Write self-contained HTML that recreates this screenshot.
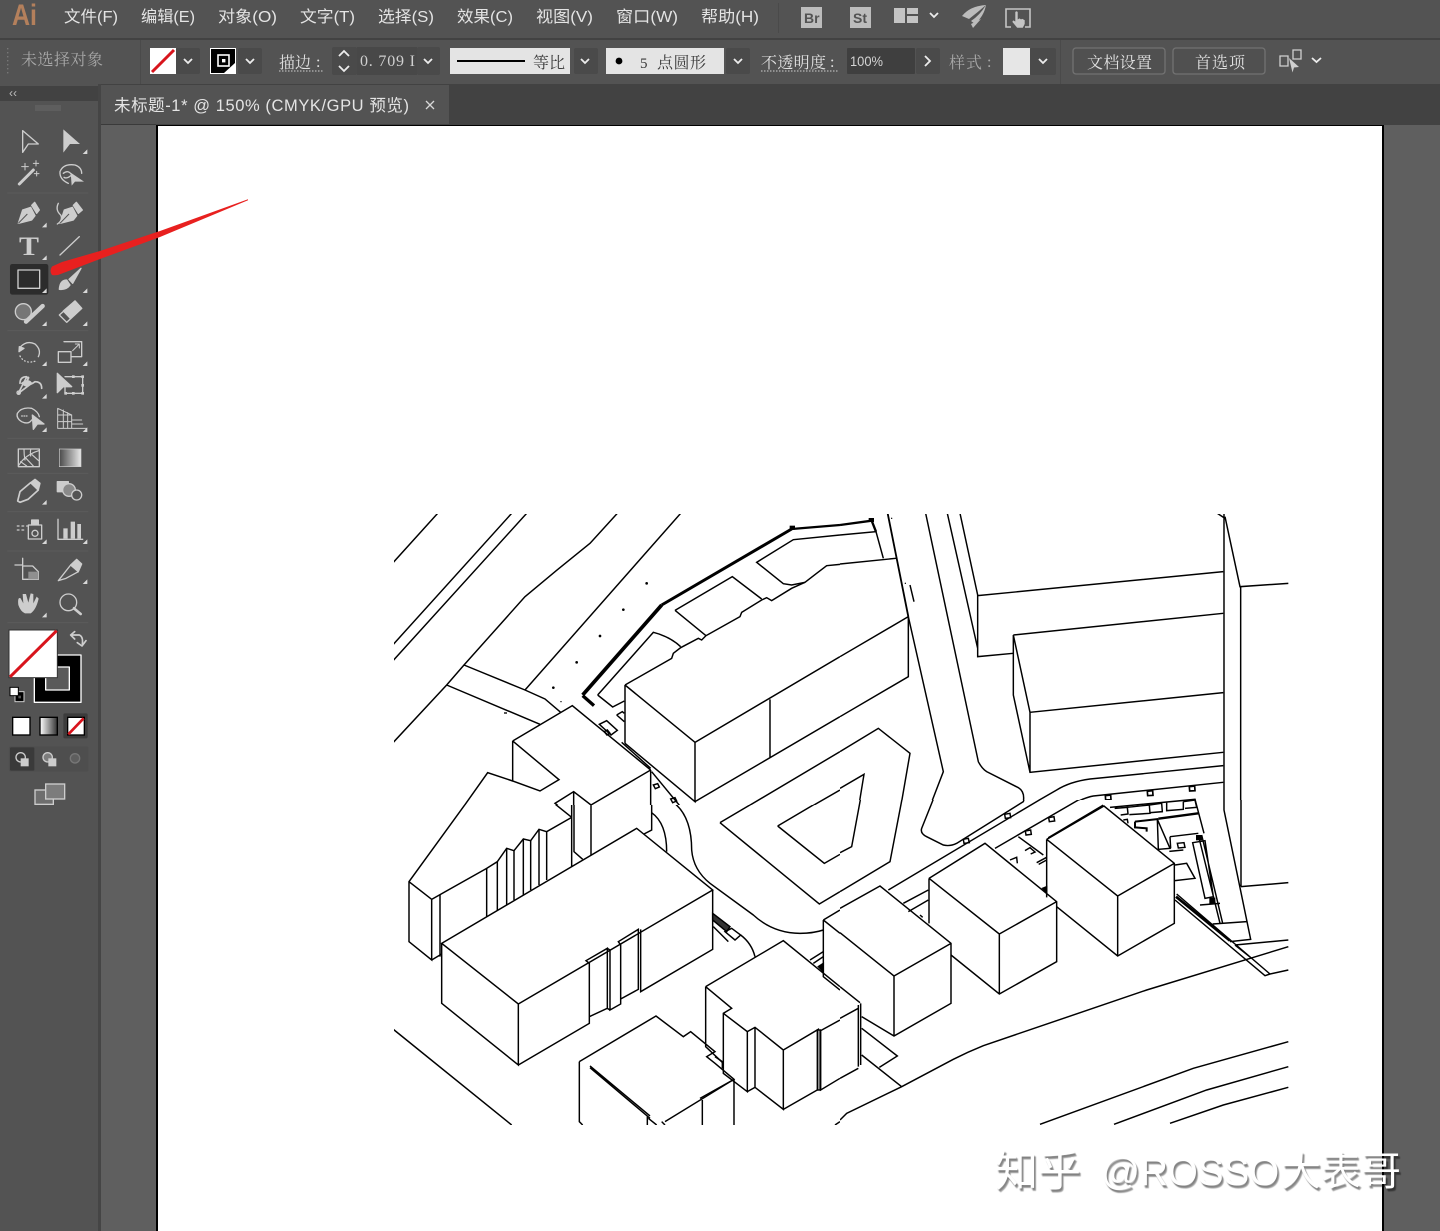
<!DOCTYPE html>
<html lang="zh"><head><meta charset="utf-8"><title>Illustrator</title>
<style>
html,body{margin:0;padding:0;background:#5f5f5f}
svg{display:block}
.m{font:16px "Liberation Sans","Noto Sans CJK SC",sans-serif;fill:#e4e4e4}
.o{font:16px "Liberation Serif","Noto Serif CJK SC",serif;fill:#e0e0e0}
.d{fill:#3a3a3a}
.g{fill:#a8a8a8}
.art{fill:none;stroke:#000;stroke-width:4.4;stroke-linejoin:miter}
.ic{fill:none;stroke:#cdcdcd;stroke-width:4;stroke-linejoin:round;stroke-linecap:round}
.f{fill:#cdcdcd}
.chev{fill:none;stroke:#ececec;stroke-width:1.8}
.wm{position:absolute;font:40px "Liberation Sans","Noto Sans CJK SC",sans-serif;color:#fff;text-shadow:2px 3px 1px rgba(0,0,0,.36),1px 2px 1px rgba(0,0,0,.22);white-space:nowrap;line-height:46px}
</style></head>
<body>
<div style="position:relative;width:1440px;height:1231px;overflow:hidden">
<svg width="1440" height="1231" viewBox="0 0 1440 1231" xmlns="http://www.w3.org/2000/svg">
<defs>
<clipPath id="c5"><rect x="394" y="514" width="446" height="291"/></clipPath>
<clipPath id="c6"><rect x="840" y="514" width="450" height="286"/></clipPath>
<clipPath id="c7"><rect x="394" y="805" width="446" height="320"/></clipPath>
<clipPath id="c8"><rect x="840" y="800" width="450" height="325"/></clipPath>
<linearGradient id="gr" x1="0" x2="1"><stop offset="0" stop-color="#4a4a4a"/><stop offset="1" stop-color="#e8e8e8"/></linearGradient>
<linearGradient id="gr2" x1="0" x2="1"><stop offset="0" stop-color="#fff"/><stop offset="1" stop-color="#333"/></linearGradient>
</defs>

<!-- canvas -->
<rect width="1440" height="1231" fill="#5f5f5f"/>
<rect x="156" y="124" width="1228" height="1107" fill="#000"/>
<rect x="158" y="126" width="1224" height="1105" fill="#fff"/>

<!-- artwork zone 5 -->
<g clip-path="url(#c5)"><g transform="translate(390 505) scale(.33333)" class="art">
<path d="M10 172L143 25M10 418L365 25M10 466L410 25"/>
<path d="M10 712L170 540L222 480L405 275Q500 195 600 115L682 25"/>
<path d="M405 555L872 25"/>
<path d="M222 480L405 555L465 582L512 622M170 540L450 658"/>
<path d="M578 570L815 300" stroke-width="11"/>
<path d="M815 300L1205 72" stroke-width="9"/>
<path d="M1205 72L1350 60" stroke-width="7"/>
<path d="M578 572L612 602" stroke-width="10"/>
<path d="M623 570L790 382Q840 395 872 425M623 570L668 606L703 588"/>
<path d="M1350 90L1210 104L1100 172L1180 236L1205 240L1245 232L1280 205L1310 182L1350 178"/>
<path d="M855 316L1027 215L1115 282M855 316L948 392"/>
<path d="M705 540L845 460L850 445L872 428L925 400L935 405L948 392L1050 335L1055 322L1115 285L1130 278L1145 287L1205 250L1245 232"/>
<path d="M705 540L705 715M705 540L915 712L915 890L705 715M915 712L1350 455M915 890L1350 635M1140 583L1140 758"/>
<path d="M680 630L697 620L703 625M680 630L703 650"/>
<path d="M628 658L650 647L682 676L663 690Z"/>
<path d="M643 680L652 675L660 685L651 690Z"/>
<path d="M368 708L547 602L782 795M368 708L368 828L450 858L507 824L368 708"/>
<path d="M368 828L293 803L203 930"/>
<path d="M782 795L603 900L551 860L495 895L540 930M551 860L551 930M603 900L603 930M782 795L782 930"/>
<path d="M695 712L782 790"/>
<path d="M785 800L888 925"/>
<path d="M790 840L803 836L808 846L796 851ZM842 882L855 878L860 888L848 893Z"/>
<path d="M1030 930L1350 740M1220 930L1350 855"/>
<g fill="#000" stroke="none"><circle cx="770" cy="235" r="4"/><circle cx="700" cy="314" r="4"/><circle cx="630" cy="393" r="4"/><circle cx="560" cy="472" r="4"/><circle cx="490" cy="548" r="4"/><circle cx="513" cy="590" r="2"/><rect x="342" y="622" width="9" height="4"/><rect x="1199" y="62" width="16" height="12"/></g>
</g></g>

<!-- artwork zone 6 -->
<g clip-path="url(#c6)"><g transform="translate(840 505) scale(.33333)" class="art">
<path d="M0 60L95 47L108 80" stroke-width="7"/>
<rect x="86" y="39" width="16" height="12" fill="#000" stroke="none"/>
<path d="M0 90L108 80L130 160M0 177L168 160"/>
<path d="M143 25L205 335" stroke-width="5.500"/>
<path d="M205 335L205 515L0 635M205 335L0 455"/>
<path d="M205 335L310 800L260 930"/>
<path d="M210 240L222 290"/>
<path d="M257 25L415 770Q425 790 440 800L535 848Q555 860 550 890L490 928"/>
<path d="M322 25L413 430M360 25L413 270L413 455L520 445M413 272L1150 200"/>
<path d="M520 390L1150 325M520 390L520 570L570 802L1150 742M520 390L570 622L570 802M570 622L1150 563"/>
<path d="M1150 782L750 822Q690 830 650 855L520 930"/>
<path d="M1150 832L760 873Q720 880 640 930"/>
<path d="M1152 25L1152 915L1155 930M1202 245L1202 930M1155 35L1200 245L1345 235M1132 25L1155 40"/>
<path d="M0 740L115 670L210 745L178 930M0 850L72 808L52 930"/>
<g fill="#000" stroke="none"><circle cx="155" cy="40" r="2"/><circle cx="196" cy="235" r="2"/></g>
<path d="M796 872L812 870L813 884L797 885ZM922 859L938 857L939 871L923 872ZM1048 845L1064 843L1065 857L1049 858Z" stroke-width="5"/>
</g></g>

<!-- artwork zone 7 -->
<g clip-path="url(#c7)"><g transform="translate(390 800) scale(.33333)" class="art">
<path d="M235 0L57 245L57 425L125 480L125 298L57 245M125 298L290 205L322 185L350 145L372 152L400 117L422 122L447 88L470 95L545 52"/>
<path d="M150 285L150 470M125 480L155 462"/>
<path d="M290 205L290 350M322 185L322 332M350 145L350 315M372 152L372 300M400 117L400 285M422 122L422 270M447 88L447 255M470 95L470 240"/>
<path d="M545 52L495 12L530 0M545 0L545 200M552 0L552 155L578 178M603 0L603 165M785 0L785 90L762 102"/>
<path d="M155 430L740 85L968 270L385 612ZM155 430L155 610L385 795L385 612M385 795L598 670L598 490L588 482L652 445L652 625L598 650"/>
<path d="M652 445L660 450L660 630L692 612L692 435L685 425L745 388L745 568L692 597M660 630L652 625"/>
<path d="M752 388L752 575L968 448L968 270"/>
<path d="M785 38Q830 70 830 155"/>
<path d="M840 0Q905 40 905 150Q910 210 960 250L1090 345Q1150 400 1230 400Q1270 400 1300 390"/>
<path d="M968 340L1020 380L1010 395L968 360Z" fill="#333" stroke="#000"/>
<path d="M1005 395L1025 385L1052 405L1035 420Z"/>
<path d="M970 380L1015 425M1052 405Q1085 430 1095 470"/>
<path d="M990 68L1288 312L1350 275M990 68L1105 0M1163 78L1303 190L1350 163M1163 78L1295 0"/>
<path d="M10 688L365 975"/>
<path d="M1300 360L1350 330M1300 360L1350 400M1300 360L1300 530L1350 570"/>
<path d="M947 560L1180 422L1350 560M947 560L1025 625L1000 640L1000 820L1072 875L1072 695L1000 640M947 560L947 740L1000 790"/>
<path d="M1072 695L1095 682L1180 750L1180 928L1095 862L1072 875M1095 682L1095 862M1180 750L1285 688L1285 870M1180 928L1285 868M1292 690L1292 870L1350 835M1292 692L1350 660"/>
<rect x="1282" y="690" width="9" height="180" fill="#999" stroke="#000"/>
<path d="M568 785L798 648L880 710L902 695L975 755L950 770L975 790L1032 838L825 965M568 785L568 965L578 975"/>
<path d="M600 798L780 948M600 803L780 955M1032 838L1032 975M937 900L937 975M930 895L1032 838M772 950L772 975M775 955L800 975M815 965L825 975"/>
<path d="M975 770L997 785L997 805M1260 480L1300 455M1270 490L1300 470"/>
<path d="M1285 500L1300 490L1300 515Z" fill="#000"/>
<path d="M1335 975L1350 965"/>
</g></g>

<!-- artwork zone 8 -->
<g clip-path="url(#c8)"><g transform="translate(840 780) scale(.33333)" class="art">
<path d="M197 0L150 245L0 335M72 0L35 200L0 218"/>
<path d="M303 0L245 145Q240 160 260 170L310 195Q330 200 350 190L550 65Q555 50 550 35L490 0"/>
<path d="M145 330L640 35Q680 5 750 0M465 205L715 60Q740 50 800 45L1150 5"/>
<path d="M0 385L120 318L333 490L333 670L162 768L65 710M0 458L162 588L162 768M162 588L333 490"/>
<path d="M267 295L435 190L650 365L650 545L478 642L333 525M267 295L478 462L478 642M478 462L650 365M267 295L267 430"/>
<path d="M620 178L792 78L1003 250L1003 430L833 528L650 380M620 178L620 352M620 178L833 348L833 528M833 348L1003 250"/>
<path d="M625 174L790 76" stroke-width="6"/>
<path d="M190 370L265 330M205 395L265 360M240 405L248 412"/>
<path d="M0 620L60 668M0 715L55 685M55 675L55 860M62 670L62 855M0 895L55 865"/>
<path d="M0 1020L20 1000L185 920L340 838Q385 815 430 797L920 630L1345 500M65 825L185 920M65 745L172 828L118 862"/>
<path d="M600 1033L1060 865L1345 785M822 1033L1100 930L1345 860M990 1030L1150 975L1345 922"/>
<path d="M1152 0L1152 90L1232 478L1170 485M1203 320L1345 308M1203 0L1203 320"/>
<path d="M1008 350L1170 482" stroke-width="8"/>
<path d="M1010 342L1290 582M1005 360L1275 587L1290 582M1290 582L1345 570M1185 495L1345 480M1185 495L1235 535"/>
<path d="M370 178L385 175L388 188L372 190ZM494 103L510 100L512 113L496 115ZM556 153L572 150L574 163L558 165ZM626 113L642 110L644 123L628 125Z"/>
<path d="M535 170L610 225M510 240L530 232L532 250M555 212L570 203L585 216L572 222M590 248L620 232M596 253L620 240"/>
<path d="M608 325L620 320L620 338Z" fill="#000"/>
</g></g>

<!-- details zone 10 -->
<g transform="translate(1050 770) scale(.33333)" class="art">
<path d="M180 112L435 88L462 190"/>
<path d="M194 115L232 112L234 132L212 135M232 112L298 105L300 130L238 134M298 105L335 100L337 125L302 128M350 98L350 122L400 118L400 95M400 95L435 90L440 112L405 115"/>
<path d="M325 146L445 130" stroke-width="7"/>
<path d="M255 155L325 147M255 155L255 175" stroke-width="6"/>
<path d="M255 172L290 175L290 185" stroke-width="6"/>
<path d="M322 148L325 238L360 235L322 148M360 200L445 190M360 200L362 235M358 244L400 240"/>
<path d="M382 220L402 218L405 232L385 234Z"/>
<path d="M428 218L465 212L490 380L465 385ZM445 195L510 460M455 195L518 460"/>
<rect x="438" y="195" width="18" height="16" fill="#000" stroke="none"/>
<rect x="478" y="383" width="18" height="18" fill="#000" stroke="none"/>
<path d="M375 285L410 280L435 325L375 332"/>
<path d="M450 405L510 400M488 462L590 455"/>
<path d="M220 150L232 148L234 160"/>
</g>

<!-- toolbar chrome -->
<rect x="0" y="0" width="1440" height="38" fill="#535353"/>
<rect x="0" y="38" width="1440" height="2" fill="#424242"/>
<rect x="0" y="40" width="1440" height="44" fill="#535353"/>
<rect x="0" y="84" width="1440" height="41" fill="#424242"/>
<rect x="101" y="85" width="348" height="39" fill="#535353"/>
<rect x="0" y="84" width="98" height="1147" fill="#535353"/>
<rect x="0" y="86" width="98" height="15" fill="#424242"/>
<rect x="98" y="84" width="3" height="1147" fill="#454545"/>
<rect x="101" y="124" width="55" height="1" fill="#3a3a3a"/>

<!-- menu -->
<text x="12" y="25" style="font:bold 30px 'Liberation Sans',sans-serif;fill:#b4805c" textLength="25" lengthAdjust="spacingAndGlyphs">Ai</text>
<g class="m">
<text x="64" y="22" textLength="54" lengthAdjust="spacingAndGlyphs">文件(F)</text><text x="141" y="22" textLength="54" lengthAdjust="spacingAndGlyphs">编辑(E)</text><text x="218" y="22" textLength="59" lengthAdjust="spacingAndGlyphs">对象(O)</text><text x="300" y="22" textLength="55" lengthAdjust="spacingAndGlyphs">文字(T)</text><text x="378" y="22" textLength="56" lengthAdjust="spacingAndGlyphs">选择(S)</text><text x="457" y="22" textLength="56" lengthAdjust="spacingAndGlyphs">效果(C)</text><text x="536" y="22" textLength="57" lengthAdjust="spacingAndGlyphs">视图(V)</text><text x="616" y="22" textLength="62" lengthAdjust="spacingAndGlyphs">窗口(W)</text><text x="701" y="22" textLength="58" lengthAdjust="spacingAndGlyphs">帮助(H)</text>
</g>
<rect x="778" y="3" width="1" height="30" fill="#4a4a4a"/>
<rect x="801" y="7" width="21" height="21" fill="#bcbcbc"/>
<text x="804" y="23" style="font:bold 14px 'Liberation Sans',sans-serif;fill:#535353">Br</text>
<rect x="850" y="7" width="21" height="21" fill="#bcbcbc"/>
<text x="853" y="23" style="font:bold 14px 'Liberation Sans',sans-serif;fill:#535353">St</text>
<path d="M894 8h11v15h-11zM907 8h11v6h-11zM907 16h11v7h-11z" fill="#c4c4c4"/>
<path d="M930 13l4 4 4-4" class="chev"/>
<path d="M986 5Q970 6 962 16L969 19Q978 12 986 5Z" fill="#bcbcbc"/>
<path d="M986 5Q980 15 971 21L975 24Q984 16 986 5Z" fill="#bcbcbc"/>
<path d="M981 19L973 28L971 24Z" fill="#bcbcbc"/>
<path d="M1011 9H1006V27H1011M1025 9H1030V27H1025M1011 9H1025" fill="none" stroke="#c4c4c4" stroke-width="1.6"/>
<path d="M1015 12q1.500-2 3 0v7l1.500-1 1.500 1 1.500-.5 1.500 1 1 .5v4l-2 4h-6l-5-6 1-2 2 1z" fill="#c4c4c4" stroke="#535353" stroke-width=".6"/>

<!-- options bar -->
<g fill="#777"><rect x="7" y="48" width="1.4" height="1.4"/><rect x="7" y="52" width="1.4" height="1.4"/><rect x="7" y="56" width="1.4" height="1.4"/><rect x="7" y="60" width="1.4" height="1.4"/><rect x="7" y="64" width="1.4" height="1.4"/><rect x="7" y="68" width="1.4" height="1.4"/><rect x="7" y="72" width="1.4" height="1.4"/></g>
<text x="21" y="65" class="o g" textLength="82">未选择对象</text>
<rect x="140" y="40" width="1" height="44" fill="#4a4a4a"/>

<rect x="150" y="48" width="26" height="26" fill="#fff"/>
<path d="M152 72L174 50" stroke="#d8141c" stroke-width="3"/>
<rect x="176" y="48" width="24" height="26" rx="2" fill="#4a4a4a"/>
<path d="M184 59l4 4 4-4" class="chev"/>

<rect x="210" y="48" width="26" height="26" fill="#fff"/>
<path d="M211 49h24v14l-11 10h-13z" fill="#000"/>
<rect x="218" y="55" width="11" height="11" fill="#000" stroke="#fff" stroke-width="1.6"/>
<rect x="222" y="59" width="3.4" height="3.4" fill="#fff"/>
<rect x="238" y="48" width="24" height="26" rx="2" fill="#4a4a4a"/>
<path d="M246 59l4 4 4-4" class="chev"/>

<text x="279" y="68" class="o" textLength="32">描边</text>
<text x="316" y="67" class="o">:</text>
<path d="M279 71h45" stroke="#cfcfcf" stroke-width="1" stroke-dasharray="1.5 1.5"/>
<rect x="332" y="47" width="25" height="28" rx="2" fill="#4a4a4a"/>
<path d="M339 56l5-5 5 5M339 66l5 5 5-5" class="chev"/>
<rect x="357" y="47" width="60" height="28" fill="#484848"/>
<text x="360" y="66" class="o" style="fill:#d0d0d0" textLength="55" xml:space="preserve">0. 709 I</text>
<rect x="417" y="47" width="23" height="28" rx="2" fill="#4a4a4a"/>
<path d="M424 59l4 4 4-4" class="chev"/>

<rect x="450" y="48" width="120" height="26" fill="#e4e4e4"/>
<rect x="457" y="60" width="68" height="2" fill="#000"/>
<text x="533" y="68" class="o d" textLength="32">等比</text>
<rect x="574" y="48" width="24" height="26" rx="2" fill="#4a4a4a"/>
<path d="M581 59l4 4 4-4" class="chev"/>

<rect x="606" y="48" width="118" height="26" fill="#e4e4e4"/>
<circle cx="619" cy="61" r="3.4" fill="#000"/>
<text x="640" y="68" class="o d" style="font-size:15px">5</text>
<text x="657" y="68" class="o d" textLength="49">点圆形</text>
<rect x="726" y="48" width="24" height="26" rx="2" fill="#4a4a4a"/>
<path d="M734 59l4 4 4-4" class="chev"/>

<text x="761" y="68" class="o" textLength="65">不透明度</text>
<text x="830" y="67" class="o">:</text>
<path d="M761 71h77" stroke="#cfcfcf" stroke-width="1" stroke-dasharray="1.5 1.5"/>
<rect x="847" y="48" width="68" height="26" rx="1" fill="#3f3f3f"/>
<text x="850" y="66" style="font:14px 'Liberation Sans',sans-serif;fill:#d4d4d4" textLength="33" lengthAdjust="spacingAndGlyphs">100%</text>
<rect x="916" y="48" width="24" height="26" rx="2" fill="#4a4a4a"/>
<path d="M925 56l5 5-5 5" class="chev"/>

<text x="949" y="68" class="o g" textLength="33">样式</text>
<text x="987" y="67" class="o g">:</text>
<rect x="1003" y="48" width="27" height="27" fill="#e6e6e6"/>
<rect x="1030" y="48" width="26" height="27" rx="2" fill="#4a4a4a"/>
<path d="M1039 59l4 4 4-4" class="chev"/>
<rect x="1060" y="40" width="1" height="44" fill="#4a4a4a"/>

<rect x="1073" y="48" width="92" height="26" rx="3" fill="#505050" stroke="#727272" stroke-width="1.3"/>
<text x="1087" y="68" class="o" textLength="65">文档设置</text>
<rect x="1173" y="48" width="92" height="26" rx="3" fill="#505050" stroke="#727272" stroke-width="1.3"/>
<text x="1195" y="68" class="o" textLength="50">首选项</text>
<path d="M1280 56h8v10h-8zM1293 50h8v9h-8z" fill="none" stroke="#d0d0d0" stroke-width="1.3"/>
<path d="M1289 58l10 9-5 .5-1.5 5z" fill="#cfcfcf"/>
<path d="M1312 58l4.500 4 4.500-4" class="chev"/>

<!-- tab -->
<text x="114" y="111" style="font:16.500px 'Liberation Sans','Noto Sans CJK SC',sans-serif;fill:#e4e4e4" textLength="295" xml:space="preserve">未标题-1* @ 150% (CMYK/GPU 预览)</text>
<path d="M426 101l8 8M434 101l-8 8" stroke="#d8d8d8" stroke-width="1.3"/>

<!-- toolbox head -->
<text x="9" y="97" style="font:12px 'Liberation Sans',sans-serif;fill:#bdbdbd">‹‹</text>
<path d="M36 105v6M38 105v6M40 105v6M42 105v6M44 105v6M46 105v6M48 105v6M50 105v6M52 105v6M54 105v6M56 105v6M58 105v6M60 105v6" stroke="#6e6e6e" stroke-width=".8"/>

<!-- tools upper -->
<g transform="translate(0 120) scale(.33333)">
<rect x="30" y="432" width="115" height="92" rx="7" fill="#2c2c2c"/>
<path d="M22 219H265M22 632H265M22 955H265" stroke="#5b5b5b" stroke-width="3"/>
<g class="ic">
<path d="M68 32L115 72L85 72L68 97Z"/>
<path d="M58 192L100 150" stroke-width="9"/>
<path d="M75 130v20M65 140h20M108 122v16M100 130h16M110 154v14M103 161h14" stroke-width="3"/>
<path d="M205 190Q178 178 180 155Q190 130 225 135Q245 142 245 160M190 160Q205 148 215 165Q200 178 192 172"/>
<path d="M55 310L68 270L92 262L105 287L95 300Z" fill="#cdcdcd"/>
<path d="M95 256L104 247L118 270L110 280Z" fill="#cdcdcd"/>
<path d="M180 310L193 270L217 262L230 287L220 300Z" fill="#cdcdcd"/>
<path d="M220 256L229 247L247 270L235 280Z" fill="#cdcdcd"/>
<path d="M175 250Q165 270 182 285Q190 300 172 312"/>
<path d="M180 405L238 350"/>
<rect x="54" y="450" width="65" height="55" stroke-width="4"/>
<path d="M178 508Q180 480 200 480L210 495Q200 510 178 508Z" fill="#cdcdcd"/>
<path d="M207 478L243 445L218 490Z" fill="#cdcdcd"/>
<circle cx="70" cy="575" r="24" fill="#767676"/>
<path d="M78 605L128 558" stroke-width="13"/>
<path d="M178 585L225 543L245 565L200 607Z"/>
<path d="M190 573L225 543L245 565L212 596Z" fill="#cdcdcd"/>
<path d="M60 682Q80 660 105 672Q125 690 115 710"/>
<path d="M57 695L58 680L72 685Z" fill="#cdcdcd"/>
<path d="M60 708Q75 735 110 722" stroke-dasharray="2 8"/>
<path d="M175 695h38v32h-38zM192 665h53v45h-32" fill="none"/>
<path d="M218 692L238 672M226 672h12v12" stroke-width="3"/>
<path d="M56 818Q70 790 78 775Q95 765 75 790Q85 800 105 785Q125 785 125 805M55 820L95 790M80 770Q60 770 60 790" stroke-width="5"/>
<path d="M65 790Q85 775 95 790Q80 805 65 790Z" fill="#cdcdcd"/>
<circle cx="56" cy="818" r="5"/>
<path d="M195 770H248V820H195V800"/>
<path d="M172 760L215 800H190L172 818Z" fill="#cdcdcd"/>
<g fill="#cdcdcd" stroke="none"><rect x="216" y="766" width="8" height="8"/><rect x="244" y="766" width="8" height="8"/><rect x="244" y="792" width="8" height="8"/><rect x="244" y="816" width="8" height="8"/><rect x="216" y="816" width="8" height="8"/><rect x="193" y="816" width="8" height="8"/></g>
<path d="M95 900Q85 915 65 905Q48 895 52 880Q65 860 95 865Q115 875 118 890"/>
<path d="M65 888h20" stroke-dasharray="2 5"/>
<path d="M97 885L132 912L112 912L100 928Z" fill="#cdcdcd"/>
<path d="M173 865L215 885V925H173ZM173 885H215M173 905H215M190 870V925M203 878V925M215 900H245M215 912H248M173 925H260" stroke-width="3"/>
</g>
<path d="M55 310L82 282" stroke="#535353" stroke-width="3"/>
<path d="M180 310L207 282" stroke="#535353" stroke-width="3"/>
<path d="M190 28L240 72L210 72L190 98Z" class="f"/>
<path d="M212 158L252 185L225 185L215 197Z" class="f"/>
<text x="57" y="405" style="font:bold 80px 'Liberation Serif',serif;fill:#cdcdcd" textLength="60" lengthAdjust="spacingAndGlyphs">T</text>
<path d="M262 88v14h-14zM140 308v14h-14zM140 406v14h-14zM140 505v14h-14zM262 505v14h-14zM140 604v14h-14zM262 604v14h-14zM140 724v14h-14zM262 724v14h-14zM140 822v14h-14zM140 922v14h-14zM262 922v14h-14z" fill="#d8d8d8"/>
</g>

<!-- tools lower -->
<g transform="translate(0 440) scale(.33333)">
<path d="M22 100H265M22 215H265M22 333H265M22 548H265" stroke="#5b5b5b" stroke-width="3"/>
<g class="ic">
<rect x="55" y="27" width="63" height="53"/>
<path d="M57 75Q75 45 116 32M75 60Q72 45 72 28M92 48Q90 38 92 28M62 65L80 78M78 55L100 78M96 44L116 62" stroke-width="3.500"/>
<path d="M53 183L60 155L92 128L115 150L84 178L60 187Z" stroke-width="5"/>
<path d="M92 128L105 118L120 130L115 150" fill="#cdcdcd"/>
<path d="M172 125H205V155H172Z" fill="#cdcdcd"/>
<circle cx="207" cy="150" r="19" fill="#8a8a8a"/>
<circle cx="230" cy="165" r="15" fill="#535353"/>
<rect x="85" y="255" width="40" height="42"/>
<circle cx="105" cy="280" r="9"/>
<path d="M95 255V240H115V255" fill="#cdcdcd"/>
<path d="M52 258h5M66 258h5M80 258h2M52 270h5M66 270h5" stroke-width="4"/>
<path d="M174 238V298H248"/>
<path d="M190 296V265H203V296ZM212 296V245H225V296ZM232 296V252H243V296Z" fill="#cdcdcd" stroke="none"/>
<path d="M68 355V375M45 375H68"/>
<path d="M68 378H98L115 395V418H68Z"/>
<path d="M85 395H115V418H85Z" fill="#8f8f8f" stroke="none"/>
<path d="M175 422L212 375L235 395L198 415Z"/>
<path d="M212 375L230 358L245 372L235 395Z" fill="#cdcdcd"/>
<circle cx="205" cy="487" r="25"/>
<path d="M222 505L242 522" stroke-width="8"/>
<rect x="103" y="645" width="140" height="142" fill="#000" stroke="#fff" stroke-width="4"/>
<rect x="137" y="681" width="71" height="69" fill="#5a5a5a" stroke="#fff" stroke-width="4"/>
<path d="M215 585H238Q250 590 247 612M212 585L224 575M212 585L224 597M232 608L246 618M258 602L246 618" stroke-width="5"/>
</g>
<path d="M55 495Q52 470 62 475L70 490L68 462L78 462L85 488L92 460L100 462L100 490L110 470L116 476Q108 510 92 520H75Q62 515 55 495Z" fill="#cdcdcd"/>
<rect x="178" y="27" width="65" height="53" fill="url(#gr)" stroke="#cdcdcd" stroke-width="2"/>
<path d="M140 180v14h-14zM140 298v14h-14zM262 298v14h-14zM262 418v14h-14zM140 518v14h-14z" fill="#d8d8d8"/>

<!-- fill -->
<rect x="27" y="570" width="145" height="143" fill="#fff" stroke="#333" stroke-width="3"/>
<path d="M30 711L170 572" stroke="#d8141c" stroke-width="9"/>
<!-- default fill stroke -->
<rect x="45" y="755" width="27" height="30" fill="#000" stroke="#cdcdcd" stroke-width="3"/>
<rect x="30" y="742" width="25" height="25" fill="#fff" stroke="#000" stroke-width="3"/>
<rect x="55" y="767" width="8" height="8" fill="#535353"/>
<!-- buttons -->
<rect x="190" y="820" width="73" height="75" rx="5" fill="#3c3c3c"/>
<rect x="38" y="832" width="52" height="53" fill="#fff" stroke="#000" stroke-width="4"/>
<rect x="120" y="832" width="52" height="53" fill="url(#gr2)" stroke="#000" stroke-width="4"/>
<rect x="203" y="832" width="50" height="53" fill="#fff" stroke="#000" stroke-width="4"/>
<path d="M205 883L251 835" stroke="#d8141c" stroke-width="8"/>
<!-- draw modes -->
<rect x="27" y="920" width="238" height="74" rx="3" fill="#4e4e4e"/>
<rect x="30" y="922" width="73" height="70" rx="3" fill="#3a3a3a"/>
<g fill="none" stroke="#cdcdcd" stroke-width="4">
<circle cx="62" cy="952" r="14"/>
<circle cx="143" cy="952" r="14" fill="#7d7d7d"/>
<circle cx="225" cy="955" r="14" stroke="#777" fill="#5e5e5e"/>
</g>
<rect x="62" y="955" width="24" height="24" fill="#cdcdcd"/>
<rect x="145" y="955" width="24" height="24" fill="#cdcdcd"/>
<!-- screen mode -->
<rect x="105" y="1050" width="55" height="43" fill="#6e6e6e" stroke="#cdcdcd" stroke-width="4"/>
<rect x="137" y="1032" width="57" height="45" fill="#7c7c7c" stroke="#cdcdcd" stroke-width="4"/>
</g>

<!-- red arrow -->
<path d="M248 199.300L160 231L100 251L62 262L52 266.500Q49 271 52 275Q57 276 62 273.500L100 259L160 237L248 200.300Z" fill="#e8201f"/>
</svg>

<div class="wm" style="left:995px;top:1149px;font-size:43px">知乎</div>
<div class="wm" style="left:1101px;top:1150px;font-size:38.500px">@ROSSO</div>
<div class="wm" style="left:1281px;top:1149px">大表哥</div>
</div>
</body></html>
